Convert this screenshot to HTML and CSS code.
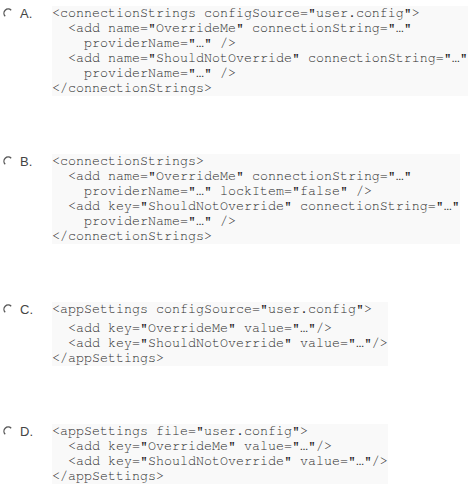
FILE: index.html
```html
<!DOCTYPE html>
<html>
<head>
<meta charset="utf-8">
<link rel="stylesheet" href="styles.css">
</head>
<body>
<div class="options">
  <div class="option">
    <svg class="radio" width="10" height="10" viewBox="0 0 10 10"><path d="M2.2 8.2 A4 4 0 0 1 8.2 2.2" fill="none" stroke="#555" stroke-width="1.3"/></svg>
    <span class="letter">A.</span>
    <div class="code">
      <div class="line">&lt;connectionStrings configSource="user.config"&gt;</div>
      <div class="line">  &lt;add name="OverrideMe" connectionString="…"</div>
      <div class="line">    providerName="…" /&gt;</div>
      <div class="line">  &lt;add name="ShouldNotOverride" connectionString="…"</div>
      <div class="line">    providerName="…" /&gt;</div>
      <div class="line">&lt;/connectionStrings&gt;</div>
    </div>
  </div>
  <div class="option">
    <svg class="radio" width="10" height="10" viewBox="0 0 10 10"><path d="M2.2 8.2 A4 4 0 0 1 8.2 2.2" fill="none" stroke="#555" stroke-width="1.3"/></svg>
    <span class="letter">B.</span>
    <div class="code">
      <div class="line">&lt;connectionStrings&gt;</div>
      <div class="line">  &lt;add name="OverrideMe" connectionString="…"</div>
      <div class="line">    providerName="…" lockItem="false" /&gt;</div>
      <div class="line">  &lt;add key="ShouldNotOverride" connectionString="…"</div>
      <div class="line">    providerName="…" /&gt;</div>
      <div class="line">&lt;/connectionStrings&gt;</div>
    </div>
  </div>
  <div class="option">
    <svg class="radio" width="10" height="10" viewBox="0 0 10 10"><path d="M2.2 8.2 A4 4 0 0 1 8.2 2.2" fill="none" stroke="#555" stroke-width="1.3"/></svg>
    <span class="letter">C.</span>
    <div class="code">
      <div class="line first-gap">&lt;appSettings configSource="user.config"&gt;</div>
      <div class="line">  &lt;add key="OverrideMe" value="…"/&gt;</div>
      <div class="line">  &lt;add key="ShouldNotOverride" value="…"/&gt;</div>
      <div class="line">&lt;/appSettings&gt;</div>
    </div>
  </div>
  <div class="option">
    <svg class="radio" width="10" height="10" viewBox="0 0 10 10"><path d="M2.2 8.2 A4 4 0 0 1 8.2 2.2" fill="none" stroke="#555" stroke-width="1.3"/></svg>
    <span class="letter">D.</span>
    <div class="code">
      <div class="line">&lt;appSettings file="user.config"&gt;</div>
      <div class="line">  &lt;add key="OverrideMe" value="…"/&gt;</div>
      <div class="line">  &lt;add key="ShouldNotOverride" value="…"/&gt;</div>
      <div class="line">&lt;/appSettings&gt;</div>
    </div>
  </div>
</div>
</body>
</html>
```
FILE: styles.css
```css
html, body {
  margin: 0;
  padding: 0;
  background: #ffffff;
}
.options {
  display: flex;
  flex-direction: column;
  gap: 58px;
  padding-top: 6px;
}
.option {
  display: flex;
  align-items: flex-start;
}
.radio {
  margin-left: 3px;
  margin-top: 2px;
  flex: none;
}
.letter {
  font-family: "Liberation Sans", Arial, sans-serif;
  font-size: 13px;
  line-height: 15px;
  color: #444;
  margin-left: 7px;
  width: 32px;
  flex: none;
}
.code {
  font-family: "Nimbus Mono PS", "Nimbus Mono L", "FreeMono", "Courier New", "Liberation Mono", monospace;
  font-size: 13.33px;
  line-height: 15px;
  color: #2a2a2a;
  background: #f9f9f9;
}
.line {
  white-space: pre;
}
.first-gap {
  margin-bottom: 4px;
}
```
